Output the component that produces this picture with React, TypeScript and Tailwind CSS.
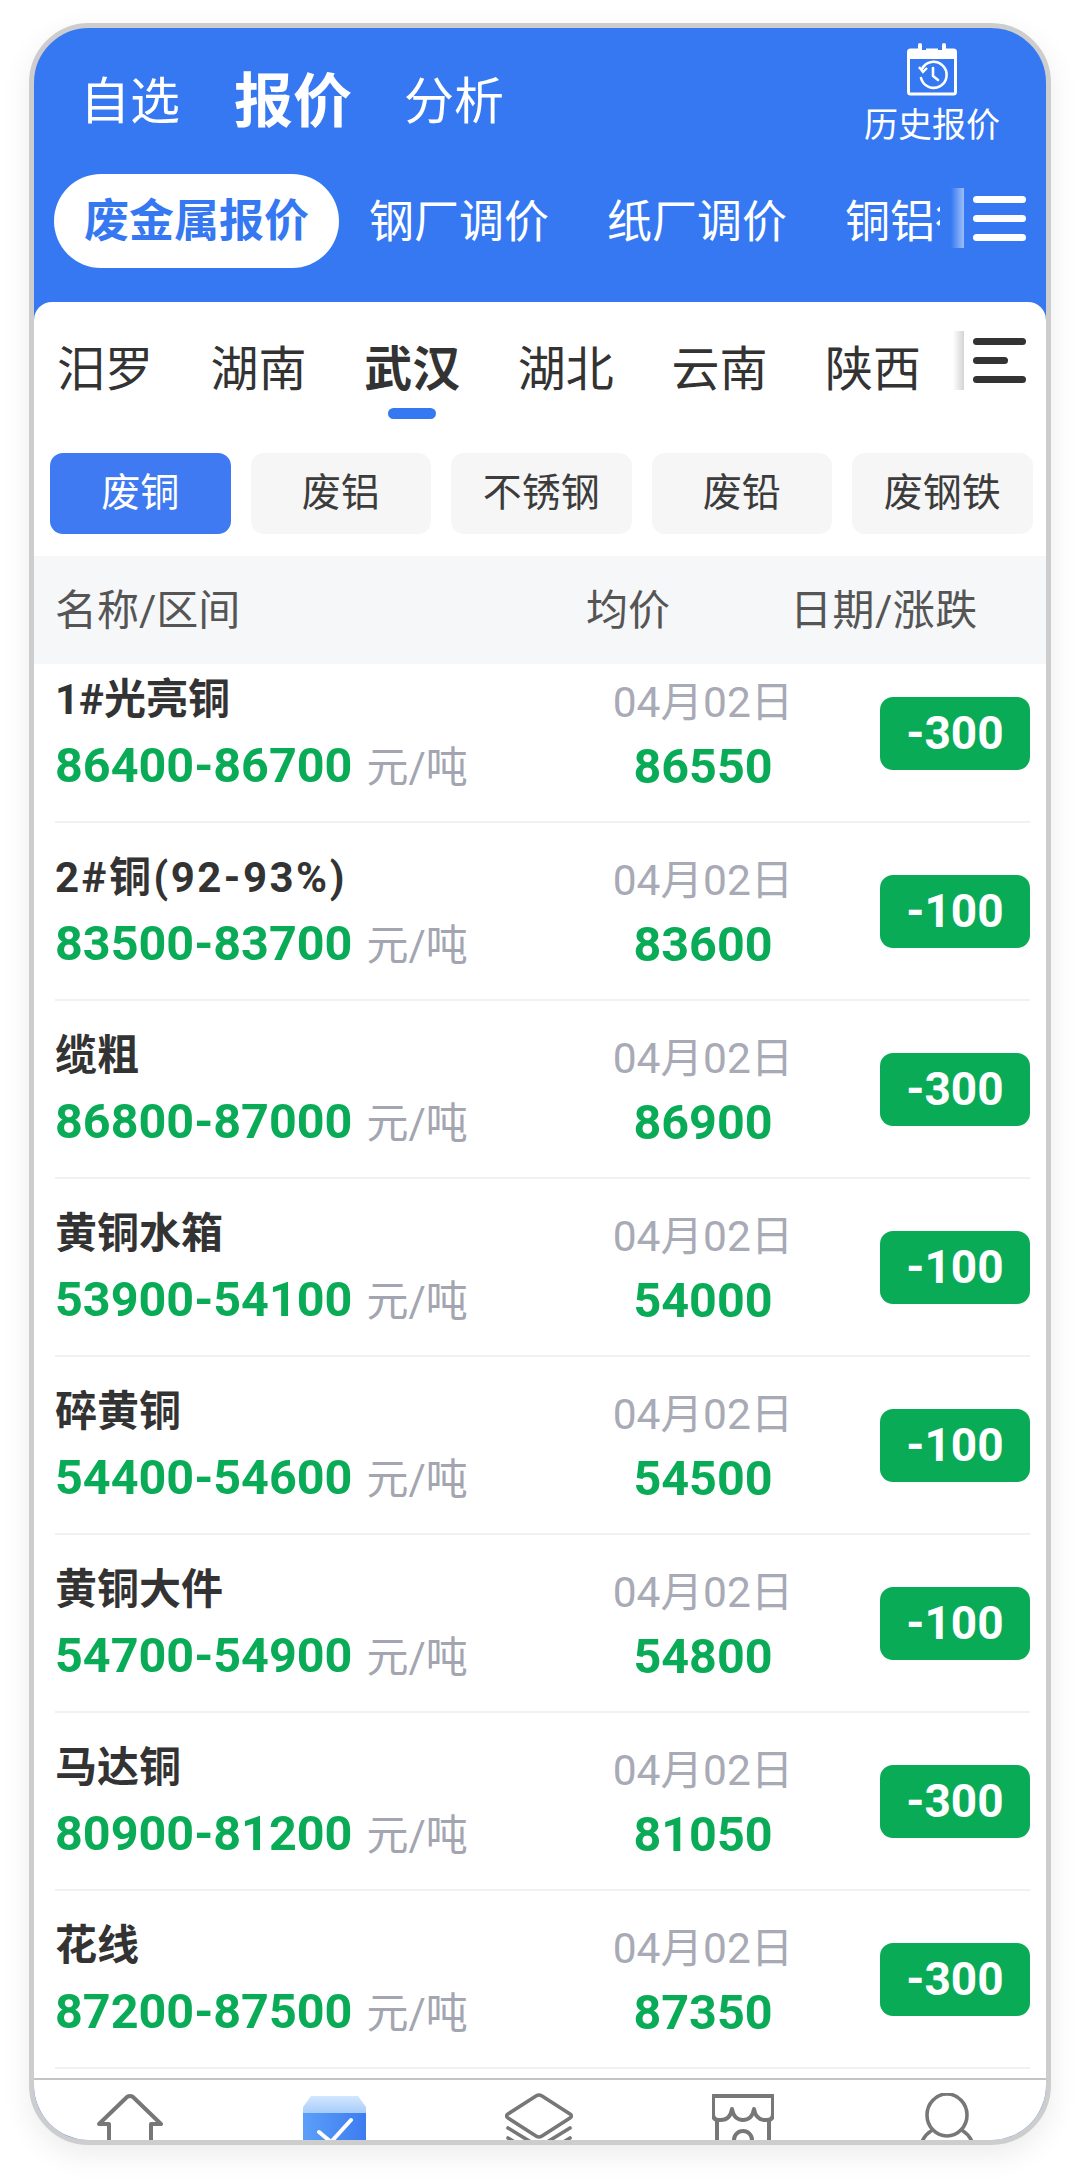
const cjk = "font-['Roboto','Noto_Sans_CJK_SC',sans-serif]"

const regions = ["汨罗", "湖南", "武汉", "湖北", "云南", "陕西"]
const chips = ["废铜", "废铝", "不锈钢", "废铅", "废钢铁"]

const rows = [
  { name: "1#光亮铜", range: "86400-86700", avg: "86550", diff: "-300" },
  { name: "2#铜(92-93%)", range: "83500-83700", avg: "83600", diff: "-100", wide: true },
  { name: "缆粗", range: "86800-87000", avg: "86900", diff: "-300" },
  { name: "黄铜水箱", range: "53900-54100", avg: "54000", diff: "-100" },
  { name: "碎黄铜", range: "54400-54600", avg: "54500", diff: "-100" },
  { name: "黄铜大件", range: "54700-54900", avg: "54800", diff: "-100" },
  { name: "马达铜", range: "80900-81200", avg: "81050", diff: "-300" },
  { name: "花线", range: "87200-87500", avg: "87350", diff: "-300" },
]

function CalendarIcon() {
  return (
    <svg width="50" height="54" viewBox="0 0 50 54" fill="none" stroke="white">
      <path d="M13 8H3.5a2 2 0 0 0-2 2v40a2 2 0 0 0 2 2h43a2 2 0 0 0 2-2V10a2 2 0 0 0-2-2H37M19 8h12" strokeWidth="3" />
      <path d="M2 8h46v9H2z" fill="white" stroke="none" />
      <path d="M13 3v9M37 3v9" strokeWidth="4" strokeLinecap="round" />
      <path d="M15 27a13 13 0 1 1-1 9" strokeWidth="2.6" strokeLinecap="round" />
      <path d="M12 25l4 5 4-4" strokeWidth="2.4" />
      <path d="M26 26v8l5 4" strokeWidth="2.6" strokeLinecap="round" />
    </svg>
  )
}

function HomeIcon() {
  return (
    <svg width="68" height="64" viewBox="0 0 68 64" fill="none" stroke="#777" strokeWidth="4" strokeLinejoin="round" strokeLinecap="round">
      <path d="M13 31v30M55 31v30M13 31H3L31 4q3-2 6 0l28 27H55" />
    </svg>
  )
}

function OrderIcon() {
  return (
    <svg width="63" height="64" viewBox="0 0 63 64">
      <defs>
        <linearGradient id="lid" x1="0" y1="0" x2="0" y2="1">
          <stop offset="0" stopColor="#d3e6fe" />
          <stop offset="1" stopColor="#a4cbfa" />
        </linearGradient>
        <linearGradient id="box" x1="0" y1="0" x2="1" y2="0">
          <stop offset="0" stopColor="#5c9ff8" />
          <stop offset="1" stopColor="#3d7cf0" />
        </linearGradient>
      </defs>
      <path d="M0 14L8 3h47l8 11v7H0z" fill="url(#lid)" />
      <path d="M0 20h63v44H0z" fill="url(#box)" />
      <path d="M16 39l12 10 20-22" fill="none" stroke="white" strokeWidth="4" strokeLinecap="round" />
    </svg>
  )
}

function LayersIcon() {
  return (
    <svg width="68" height="64" viewBox="0 0 68 64" fill="none" stroke="#777" strokeWidth="3.6" strokeLinecap="round" strokeLinejoin="round">
      <path d="M31 3q3-2 6 0l28 18q3 2 0 4L37 43q-3 2-6 0L3 25q-3-2 0-4z" />
      <path d="M3 35l31 19 31-19M3 45l31 19 31-19" />
    </svg>
  )
}

function ShopIcon() {
  return (
    <svg width="62" height="64" viewBox="0 0 62 64" fill="none" stroke="#777" strokeLinejoin="round">
      <path d="M1 3h60v18q0 6-6 6-11 1-13-11-2 11-11 11t-11-11q-2 12-13 11-6 0-6-6z" strokeWidth="4" />
      <path d="M5 27v35M57 27v35" strokeWidth="4" />
      <path d="M22 62V47a9 9 0 0 1 18 0v15" strokeWidth="4" />
    </svg>
  )
}

function UserIcon() {
  return (
    <svg width="68" height="64" viewBox="0 0 68 64" fill="none" stroke="#777" strokeWidth="3.6" strokeLinecap="round">
      <ellipse cx="34" cy="22" rx="20" ry="21" />
      <path d="M18 38Q8 44 5 62M50 38q10 6 13 24" />
    </svg>
  )
}

export default function App() {
  return (
    <div className={`${cjk} min-h-[2179px] bg-white pl-[29px] pt-[23px]`}>
      <div className="flex h-[2122px] w-[1022px] flex-col overflow-hidden rounded-[60px] border-[5px] border-[#cdcdcd] bg-[#3578f2] shadow-[0_10px_30px_rgba(0,0,0,0.08)]">
        {/* Top tabs */}
        <div className="flex h-[146px] shrink-0 text-white">
          <div className="flex items-center pl-[46px] pt-[2px]">
            <span className="text-[50px]">自选</span>
            <span className="ml-[54px] text-[59px] font-bold">报价</span>
            <span className="ml-[52px] text-[50px]">分析</span>
          </div>
          <div className="ml-auto mr-[46px] flex flex-col items-center pt-[14px]">
            <CalendarIcon />
            <span className="mt-[7px] text-[34px] leading-[44px]">历史报价</span>
          </div>
        </div>

        {/* Category row */}
        <div className="flex h-[128px] shrink-0 items-start pl-[20px] text-white">
          <div className="flex w-[886px] items-center overflow-hidden">
            <span className="flex h-[94px] shrink-0 items-center rounded-full bg-white px-[30px] pt-[2px] text-[45px] font-bold text-[#3578f2]">
              废金属报价
            </span>
            <span className="ml-[30px] shrink-0 pt-[3px] text-[45px]">钢厂调价</span>
            <span className="ml-[58px] shrink-0 pt-[3px] text-[45px]">纸厂调价</span>
            <span className="ml-[58px] shrink-0 pt-[3px] text-[45px]">铜铝行情</span>
          </div>
          <div className="relative flex h-[94px] items-center">
            <div className="absolute left-[11px] top-[14px] h-[60px] w-[13px] bg-gradient-to-r from-[#3578f2] to-[#9dbdf8]" />
            <div className="ml-[33px] mb-[6px] flex w-[53px] flex-col gap-[12px]">
              <div className="h-[7px] rounded-full bg-white" />
              <div className="h-[7px] rounded-full bg-white" />
              <div className="h-[7px] rounded-full bg-white" />
            </div>
          </div>
        </div>

        {/* White panel */}
        <div className="flex min-h-0 flex-1 flex-col overflow-hidden rounded-t-[18px] bg-white">
          <div className="relative flex h-[112px] shrink-0 pl-[23px] pt-[36px] text-[#333]">
            <div className="flex w-[900px] gap-[57.6px]">
              {regions.map((r) => (
                <div key={r} className="relative flex w-[96px] shrink-0 justify-center">
                  <span className={`text-[48px] leading-[64px] ${r === "武汉" ? "font-bold" : ""}`}>{r}</span>
                  {r === "武汉" && <div className="absolute left-[24px] top-[70px] h-[11px] w-[48px] rounded-full bg-[#3578f2]" />}
                </div>
              ))}
            </div>
            <div className="absolute left-[919px] top-[29px] h-[59px] w-[11px] bg-gradient-to-r from-white to-[#d4d4d4]" />
            <div className="absolute left-[939px] top-[36px] flex w-[53px] flex-col gap-[12px]">
              <div className="h-[7px] rounded-full bg-[#333]" />
              <div className="h-[7px] w-[35px] rounded-full bg-[#333]" />
              <div className="h-[7px] rounded-full bg-[#333]" />
            </div>
          </div>

          <div className="flex shrink-0 gap-[20px] pl-[16px] pt-[39px]">
            {chips.map((c, i) => (
              <div
                key={c}
                className={`flex h-[81px] w-[180.5px] items-center justify-center rounded-[13px] text-[39px] ${
                  i === 0 ? "bg-[#3f7af2] text-white" : "bg-[#f6f6f6] text-[#3c3c3c]"
                }`}
              >
                {c}
              </div>
            ))}
          </div>

          <div className="mt-[22px] flex h-[108px] shrink-0 items-center bg-[#f6f7f9] pl-[21px] text-[42px] text-[#555]">
            <span className="w-[531px]">名称/区间</span>
            <span className="w-[204px]">均价</span>
            <span className="tracking-[0.5px]">日期/涨跌</span>
          </div>

          {/* Price list, scrolled a little */}
          <div className="min-h-0 flex-1 overflow-hidden pl-[21px] pr-[16px]">
            <div className="mt-[-19px]">
              {rows.map((row) => (
                <div key={row.name} className="flex h-[178px] items-center border-b-2 border-[#f1f1f1]">
                  <div className="w-[523px]">
                    <div className={`pt-[3px] text-[42px] font-bold leading-[65px] text-[#333] ${row.wide ? "tracking-[2.5px]" : ""}`}>{row.name}</div>
                    <div className="flex items-baseline leading-[68px]">
                      <span className="text-[48.5px] font-bold text-[#0aab57]">{row.range}</span>
                      <span className="ml-[14px] text-[42px] text-[#a3a5b0]">元/吨</span>
                    </div>
                  </div>
                  <div className="w-[250px] text-center">
                    <div className="pt-[7px] text-[42.5px] leading-[61px] text-[#a8aab6]">04月02日</div>
                    <div className="text-[48.5px] font-bold leading-[68px] text-[#0aab57]">{row.avg}</div>
                  </div>
                  <div className="ml-auto flex h-[73px] w-[150px] items-center justify-center rounded-[13px] bg-[#0aab57] text-[46px] font-bold text-white">
                    {row.diff}
                  </div>
                </div>
              ))}
            </div>
          </div>

          {/* Bottom nav */}
          <div className="flex h-[62px] shrink-0 items-start justify-between overflow-hidden border-t-2 border-[#c4c4c4] pl-[62px] pr-[65px] pt-[13px]">
            <HomeIcon />
            <OrderIcon />
            <LayersIcon />
            <ShopIcon />
            <UserIcon />
          </div>
        </div>
      </div>
    </div>
  )
}
